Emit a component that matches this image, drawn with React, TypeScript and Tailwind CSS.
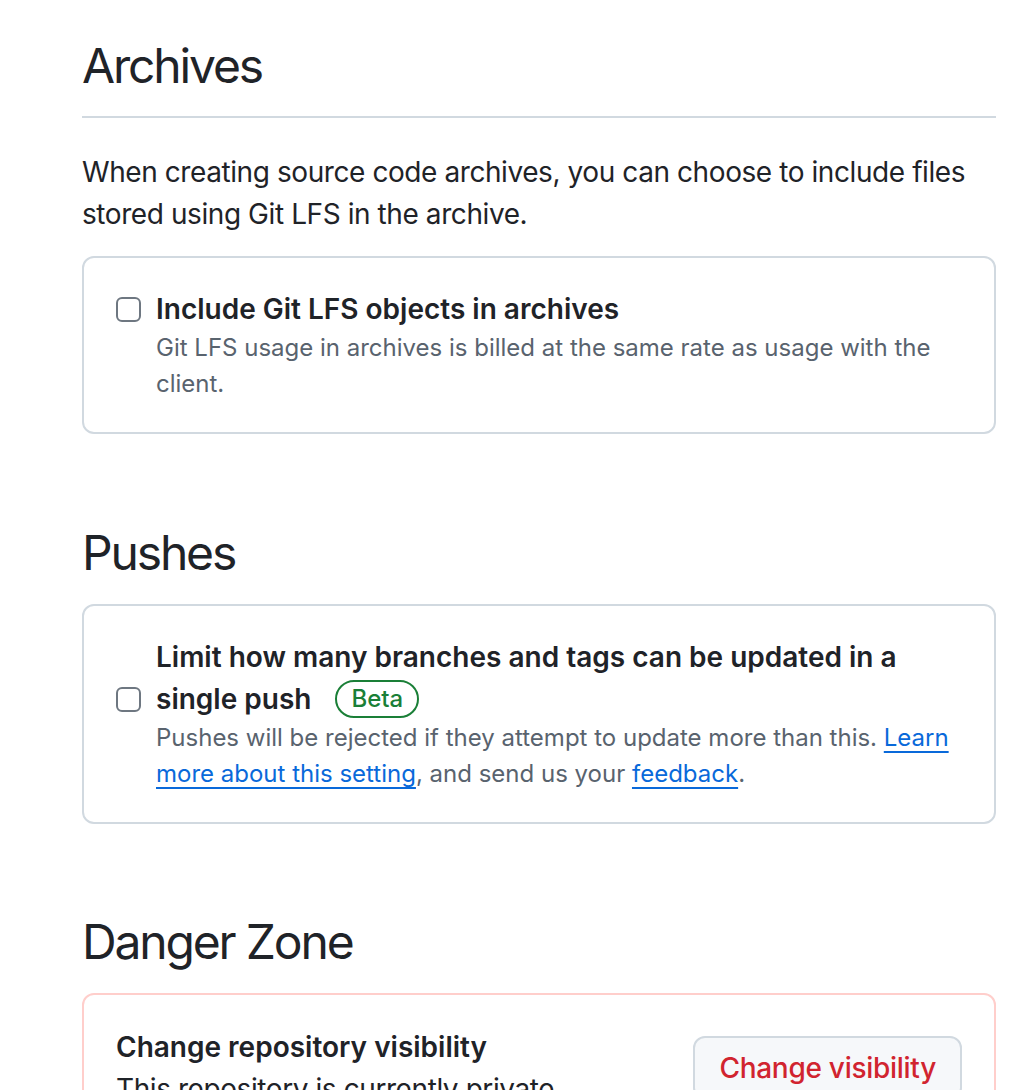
import React from "react";

const font = { fontFamily: "Inter, 'Noto Sans', sans-serif" };

function Checkbox({ className }: { className?: string }) {
  return (
    <input
      type="checkbox"
      readOnly
      className={`appearance-none shrink-0 w-[25px] h-[25px] rounded-[6px] border-2 border-[#6e7781] bg-white ${className ?? ""}`}
    />
  );
}

function SectionHeading({ children, bordered, className }: { children: React.ReactNode; bordered?: boolean; className?: string }) {
  return (
    <h2
      className={`text-[48px] leading-[60px] font-normal tracking-[-0.045em] text-[#1f2328] ${bordered ? "pb-[20px] border-b-2 border-[#d1d9e0]" : ""} ${className ?? ""}`}
    >
      {children}
    </h2>
  );
}

export default function App() {
  return (
    <div style={font} className="min-h-screen bg-white pt-[36px] pl-[82px] pr-[34px] text-[#1f2328] antialiased">
      <SectionHeading bordered>Archives</SectionHeading>
      <p className="mt-[33px] text-[28px] leading-[42px] tracking-[-0.015em]">
        When creating source code archives, you can choose to include files stored using Git LFS in the archive.
      </p>

      <div className="mt-[21px] rounded-[12px] border-2 border-[#d1d9e0] p-[30px] pl-[32px]">
        <div className="flex gap-[15px]">
          <Checkbox className="mt-[9px]" />
          <div className="flex-1 min-w-0">
            <div className="text-[28px] leading-[42px] font-semibold">Include Git LFS objects in archives</div>
            <p className="text-[24px] leading-[36px] text-[#59636e]">
              Git LFS usage in archives is billed at the same rate as usage with the client.
            </p>
          </div>
        </div>
      </div>

      <SectionHeading className="mt-[89px]">Pushes</SectionHeading>
      <div className="mt-[21px] rounded-[12px] border-2 border-[#d1d9e0] p-[30px] pl-[32px]">
        <div className="flex gap-[15px]">
          <Checkbox className="mt-[51px]" />
          <div className="flex-1 min-w-0">
            <div className="text-[28px] leading-[42px] font-semibold pr-[60px]">
              Limit how many branches and tags can be updated in a single push
              <span className="ml-[24px] inline-flex items-center align-middle h-[38px] px-[14px] rounded-full border-2 border-[#1a7f37] text-[#1a7f37] text-[24px] font-medium leading-none relative -top-[2px]">
                Beta
              </span>
            </div>
            <p className="text-[24px] leading-[36px] text-[#59636e]">
              Pushes will be rejected if they attempt to update more than this.{" "}
              <a className="text-[#0969da] underline decoration-2 underline-offset-[5px]">Learn more about this setting</a>, and send us your{" "}
              <a className="text-[#0969da] underline decoration-2 underline-offset-[5px]">feedback</a>.
            </p>
          </div>
        </div>
      </div>

      <SectionHeading className="mt-[88px]">Danger Zone</SectionHeading>
      <div className="mt-[21px] rounded-[12px] border-2 border-[#ffcecb] px-[32px] py-[31px]">
        <div className="flex items-center justify-between gap-[32px]">
          <div className="min-w-0">
            <div className="text-[28px] leading-[42px] font-semibold">Change repository visibility</div>
            <p className="text-[28px] leading-[42px] tracking-[-0.015em]">This repository is currently private.</p>
          </div>
          <button className="shrink-0 h-[64px] px-[24px] rounded-[12px] border-2 border-[#d1d9e0] bg-[#f6f8fa] text-[#d1242f] text-[28px] font-medium tracking-[-0.01em]">
            Change visibility
          </button>
        </div>
      </div>
    </div>
  );
}
